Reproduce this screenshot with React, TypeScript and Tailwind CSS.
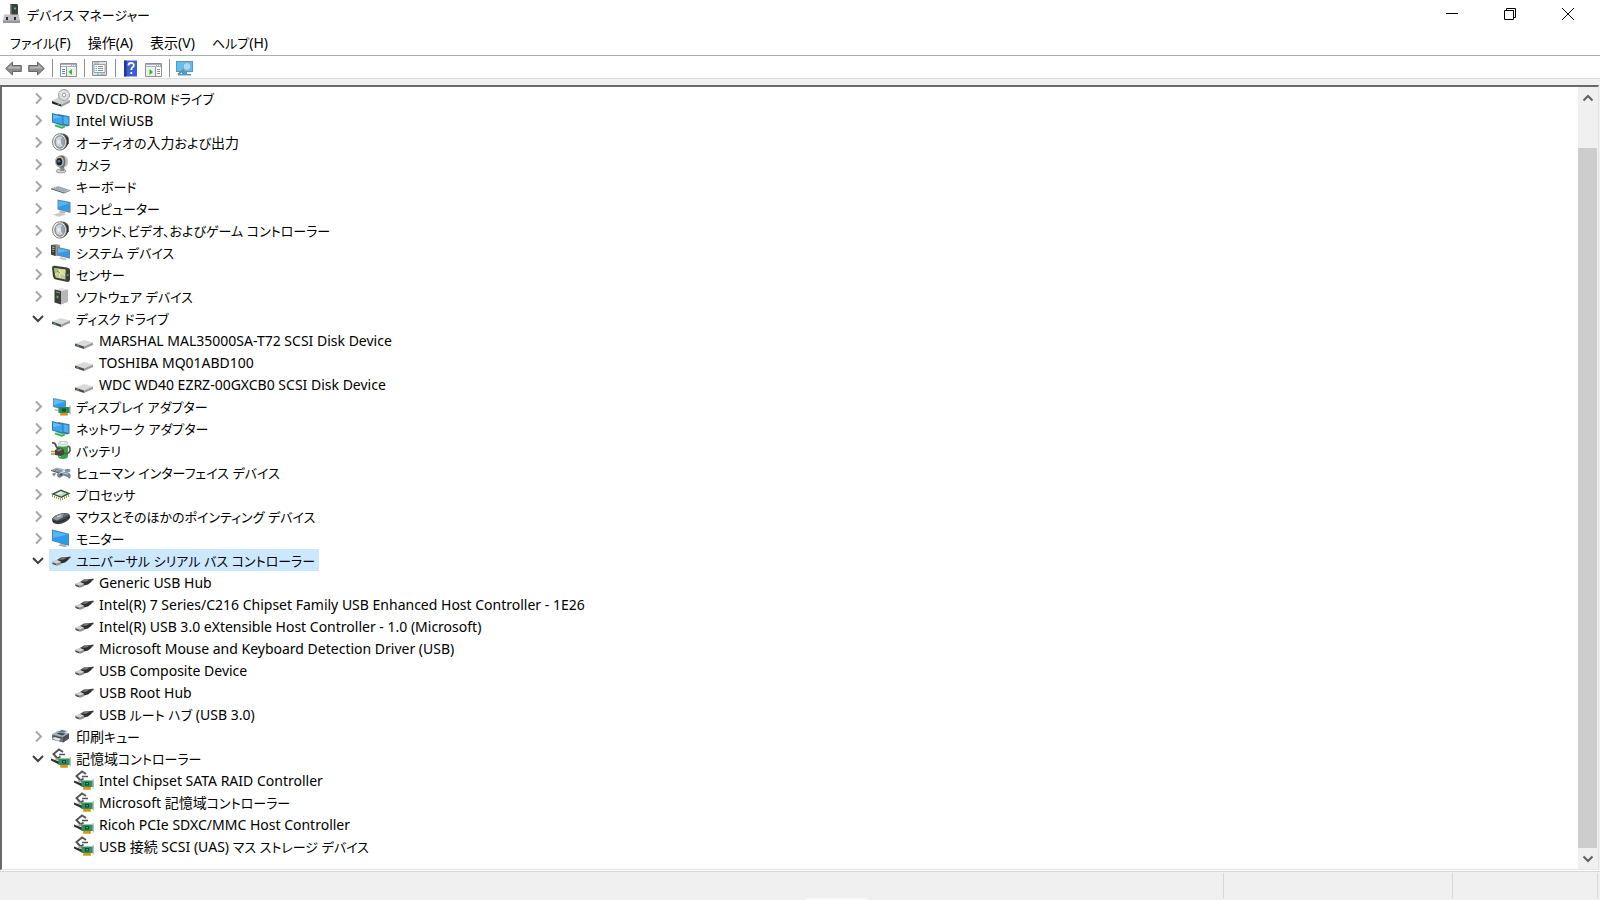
import { useState } from 'react';
import type { ReactNode } from 'react';

type IconName =
  | 'dvd' | 'network' | 'speaker' | 'camera' | 'keyboard' | 'computer' | 'system'
  | 'sensor' | 'software' | 'disk' | 'display' | 'battery' | 'hid' | 'cpu'
  | 'mouse' | 'monitor' | 'usb' | 'printer' | 'storage';

type Category = {
  label: string;
  icon: IconName;
  children?: string[];
};

const categories: Category[] = [
  { label: 'DVD/CD-ROM ドライブ', icon: 'dvd' },
  { label: 'Intel WiUSB', icon: 'network' },
  { label: 'オーディオの入力および出力', icon: 'speaker' },
  { label: 'カメラ', icon: 'camera' },
  { label: 'キーボード', icon: 'keyboard' },
  { label: 'コンピューター', icon: 'computer' },
  { label: 'サウンド、ビデオ、およびゲーム コントローラー', icon: 'speaker' },
  { label: 'システム デバイス', icon: 'system' },
  { label: 'センサー', icon: 'sensor' },
  { label: 'ソフトウェア デバイス', icon: 'software' },
  {
    label: 'ディスク ドライブ',
    icon: 'disk',
    children: [
      'MARSHAL MAL35000SA-T72 SCSI Disk Device',
      'TOSHIBA MQ01ABD100',
      'WDC WD40 EZRZ-00GXCB0 SCSI Disk Device',
    ],
  },
  { label: 'ディスプレイ アダプター', icon: 'display' },
  { label: 'ネットワーク アダプター', icon: 'network' },
  { label: 'バッテリ', icon: 'battery' },
  { label: 'ヒューマン インターフェイス デバイス', icon: 'hid' },
  { label: 'プロセッサ', icon: 'cpu' },
  { label: 'マウスとそのほかのポインティング デバイス', icon: 'mouse' },
  { label: 'モニター', icon: 'monitor' },
  {
    label: 'ユニバーサル シリアル バス コントローラー',
    icon: 'usb',
    children: [
      'Generic USB Hub',
      'Intel(R) 7 Series/C216 Chipset Family USB Enhanced Host Controller - 1E26',
      'Intel(R) USB 3.0 eXtensible Host Controller - 1.0 (Microsoft)',
      'Microsoft Mouse and Keyboard Detection Driver (USB)',
      'USB Composite Device',
      'USB Root Hub',
      'USB ルート ハブ (USB 3.0)',
    ],
  },
  { label: '印刷キュー', icon: 'printer' },
  {
    label: '記憶域コントローラー',
    icon: 'storage',
    children: [
      'Intel Chipset SATA RAID Controller',
      'Microsoft 記憶域コントローラー',
      'Ricoh PCIe SDXC/MMC Host Controller',
      'USB 接続 SCSI (UAS) マス ストレージ デバイス',
    ],
  },
];

const drawings: Record<IconName, ReactNode> = {
  dvd: (
    <>
      <path d="M1 13l7-4 11 3-9 4.500z" fill="#cfcfcf" />
      <circle cx="13" cy="7" r="5.500" fill="#dcdfdf" stroke="#9da1a1" />
      <path d="M9 4l4 3.500L17.500 5" stroke="#fafafa" fill="none" />
      <circle cx="13" cy="7" r="1.700" fill="#fff" stroke="#8d9191" strokeWidth=".8" />
      <path d="M1 13l9 3.500v2L1 15.500z" fill="#222" />
      <path d="M10 16.500l9-4.500v2.500l-9 4.500z" fill="#9d9d9d" />
      <path d="M6.500 15.500l2 .8v1l-2-.7z" fill="#35c24a" />
    </>
  ),
  network: (
    <>
      <path d="M3 15l4-1 7 2.500-4 2z" fill="#8fdc8f" />
      <path d="M4 15.500l7 2.500 3-1.500" stroke="#32b34a" strokeWidth="1.500" fill="none" />
      <path d="M7 4l11.500 2.200v9.300L16 16.500 7 14z" fill="#3079a8" />
      <path d="M8 5.200l9.500 2v7.600L8 12.800z" fill="#4fb2f0" />
      <path d="M1 3l11.500 3v10L1 12.500z" fill="#2b79a9" />
      <path d="M2 4.400l9.500 2.500v7.700L2 11.800z" fill="#3aa5ee" />
      <path d="M2 4.400l9.500 2.500L2 9z" fill="#66bff5" />
    </>
  ),
  speaker: (
    <>
      <path d="M9 1.500c5-.5 7.500 1.500 8.500 4v6c-1.500 3.500-3.500 6-8 7z" fill="#555" />
      <path d="M14 3.500l3.500 3v5l-3 3z" fill="#2c2c2c" />
      <ellipse cx="8.500" cy="10" rx="7" ry="8.200" fill="#f0f0f0" stroke="#808080" />
      <ellipse cx="8.800" cy="10" rx="5" ry="6.300" fill="#9aa3a8" stroke="#787f83" strokeWidth=".8" />
      <path d="M5 7c2-3 5-3 6-2l-2 5 3 4c-3 2-6 1-7-2z" fill="#ccd7dc" />
      <circle cx="8" cy="10" r="2" fill="#e6edf0" />
    </>
  ),
  camera: (
    <>
      <ellipse cx="10" cy="17" rx="5" ry="2" fill="#d0d0d0" stroke="#888" strokeWidth=".7" />
      <path d="M9 13l4-1 .5 5H9.500z" fill="#8a8a8a" />
      <circle cx="10.500" cy="7.500" r="6.300" fill="#6e6e6e" />
      <path d="M13 2a6 6 0 010 11.500c2-4 2-8 0-11.500z" fill="#c4c4c4" />
      <ellipse cx="8.500" cy="7.500" rx="4.300" ry="5.300" fill="#b9b9b9" />
      <ellipse cx="8.300" cy="7.700" rx="3" ry="3.800" fill="#1e2226" />
      <circle cx="8" cy="7.300" r="1.300" fill="#5b7fa6" />
    </>
  ),
  keyboard: (
    <>
      <path d="M0 12.200L7 10l12.500 4-6.500 2.500z" fill="#b7c0c6" />
      <path d="M0 12.200v1l13 4.200v-1z" fill="#4c5358" />
      <path d="M13 16.400v1l6.500-2.600V14z" fill="#767e83" />
      <path d="M3 12.200l10 3.200M5 11.500l10 3.200M7 10.900l9.500 3" stroke="#7f888e" strokeWidth=".7" strokeDasharray="1.500 .7" />
    </>
  ),
  computer: (
    <>
      <path d="M1 16.500l9-2 6 2-8 2.500z" fill="#dde0e2" />
      <path d="M3 16.600l7-1.500 4 1.300-7 2z" fill="#c4c9cc" />
      <path d="M9 12.500l6 1.500-1 1.500-6-1z" fill="#aeb5b9" />
      <path d="M6.500 1.500L19.500 4v11L6.500 11.500z" fill="#6e8494" />
      <path d="M7.500 2.800L18.500 5v8.500L7.500 10.500z" fill="#2f9cea" />
      <path d="M7.500 2.800L18.500 5l-11 4z" fill="#55b6f4" />
    </>
  ),
  system: (
    <>
      <path d="M0 3l5-1 4 1v10l-4 1-5-1.500z" fill="#999" />
      <path d="M0 3l4.500.7V14L0 12.500z" fill="#3a3a3a" />
      <path d="M1 5l2.500.4M1 7l2.500.4" stroke="#eee" strokeWidth=".8" />
      <circle cx="2" cy="9.500" r=".8" fill="#3fd04f" />
      <path d="M10 15l6 2-2 1.500-6-2z" fill="#c5c9cb" />
      <path d="M6 4.800l13 3v9L6 13.500z" fill="#6b8597" />
      <path d="M7 6.200l11 2.500v6.700L7 12.600z" fill="#2f9cea" />
      <path d="M7 6.200l11 2.500L7 11z" fill="#58b8f5" />
    </>
  ),
  sensor: (
    <>
      <path d="M1 4q0-2.500 2.500-2.300L16 3.500q3 .5 3 3v8.500q0 3-2.500 3L5 15.500Q2.500 15 2 12.500z" fill="#3c3f39" />
      <path d="M3 4l11.500 1.600v10L4.500 13.500z" fill="#bccf8c" />
      <path d="M3 4l5 .7L7 9l-3.300-.8z" fill="#98c46d" />
      <path d="M9 5l5.500.7v3L9 9z" fill="#dcd99a" />
      <path d="M4 11l4-3 6 3M8 5l1 9" stroke="#f5f3d0" strokeWidth="1" fill="none" />
      <path d="M6 7l3 2" stroke="#d55a3a" strokeWidth="1" />
      <circle cx="16.700" cy="11" r=".9" fill="#8a8d86" />
    </>
  ),
  software: (
    <>
      <path d="M3.500 3.500L10 2l7 1.500-6 1.500z" fill="#e4e4e4" />
      <path d="M3.500 3.500L10 5v13.500l-6.500-2z" fill="#3b3b3b" />
      <path d="M10 5l7-1.500v12.500l-7 2.500z" fill="#b7b7b7" />
      <path d="M5 6l4 1" stroke="#999" />
      <path d="M5.500 9.500l2 .5v2.500l-2-.5z" fill="#35c443" />
    </>
  ),
  disk: (
    <>
      <path d="M1 13.500l9-3.500 9 2.500-9 4z" fill="#dadada" />
      <path d="M1 13.500l9 3v2.500l-9-3z" fill="#4a4a4a" />
      <path d="M10 16.500l9-4V15l-9 4z" fill="#9c9c9c" />
      <path d="M2.500 15l2.500.8v1l-2.500-.8z" fill="#45c850" />
    </>
  ),
  display: (
    <>
      <path d="M2 2l13 2.500v10L2 11z" fill="#5b93b6" />
      <path d="M3 3.200l11 2.200v7.700L3 10.200z" fill="#2f9cea" />
      <path d="M3 3.200l11 2.200L3 9z" fill="#63bdf5" />
      <path d="M4 13l4 .8v1.700l-4-1z" fill="#b4bbbf" />
      <path d="M7.500 11h11.500v6H7.500z" fill="#2c8a5b" />
      <path d="M18.500 9.500h1.200v9h-1.200z" fill="#b8b8b8" />
      <path d="M11 12.500h4v3h-4z" fill="#174c34" />
      <path d="M9 17h8v2.500H9z" fill="#eca41e" />
      <path d="M11 17v2.500M13 17v2.500M15 17v2.500" stroke="#a86c08" strokeWidth=".6" />
    </>
  ),
  battery: (
    <>
      <path d="M7 4q0-3 5-3t5 3v12q0 3-5 3t-5-3z" fill="#35a344" />
      <path d="M7 4q0-3 5-3t5 3v2q-5 1.500-10 0z" fill="#dfe9df" />
      <ellipse cx="12" cy="3" rx="3.500" ry="1.300" fill="#fff" stroke="#a5b5a5" strokeWidth=".6" />
      <path d="M9 8v9" stroke="#90dc7d" strokeWidth="1.500" />
      <path d="M1 3q3-1 4 3l3 5" fill="none" stroke="#4b4b4b" strokeWidth="1.800" />
      <path d="M13 13c5 2 7-2 5.500-6l-2-1" fill="none" stroke="#5a5a5a" strokeWidth="1.700" />
      <path d="M4 10l5-2.500 4 2v5L9.500 16 4 15z" fill="#45453d" />
      <path d="M5.500 10.500l4-2 2 1-4 2z" fill="#8d8d80" />
      <path d="M0 11.500h4M0 14h4" stroke="#b39537" strokeWidth="1.300" />
    </>
  ),
  hid: (
    <>
      <path d="M0 8l6-2.500 8 2L9 10.500z" fill="#aab3b9" />
      <path d="M0 8l9 2.500v1.200L0 9z" fill="#4e565b" />
      <path d="M2 8l7 2M4 7l7 2" stroke="#69737a" strokeWidth=".7" />
      <path d="M6 13q1-4 5-3.500l6 1q3 1 2.500 5-1 2-3-.5l-4-1.500-3 2q-3 1-3.500-2.500z" fill="#6f8290" />
      <path d="M8 11.500q2-1.500 4-.8l5 1.500" stroke="#d2dce2" strokeWidth="1" fill="none" />
      <ellipse cx="16.500" cy="8.500" rx="3" ry="1.800" fill="#87929a" />
      <path d="M1 12l3-1.500 1 1-2 3z" fill="#7b888f" />
      <circle cx="10" cy="12.500" r="1" fill="#333c42" />
    </>
  ),
  cpu: (
    <>
      <path d="M0 10l10-4.500 9.500 4-9 4.500z" fill="#2a5b43" />
      <path d="M3.500 9.900L10 7l6 2.600-5.700 2.900z" fill="#c9d4c6" />
      <path d="M5.500 9.800L10 7.800l2 .9-5 2.200z" fill="#f1f4ef" />
      <path d="M1.500 11v2M3.500 12v2M5.500 12.700v2M7.500 13.500v2M9.500 14v2.500M11.500 14v2M13.500 13v2M15.500 12v2M17.500 11v2" stroke="#c08f2c" strokeWidth="1" />
    </>
  ),
  mouse: (
    <>
      <path d="M1 14q0-3.500 6-5.500 7-2.500 11-.5 2 2 1 4-2.500 3.500-8 5.500-5.500 1.500-8.500-.5Q1 15.500 1 14z" fill="#40474e" />
      <path d="M2 13q1-3 6-4.500 3-1 5-1l-1 4-6 3z" fill="#8e99a3" />
      <path d="M13 7.500q4-.5 5 1.200l-5.500 2.800z" fill="#646f78" />
      <path d="M2 15q3 2 8 .5t8-4.500" stroke="#1f2327" fill="none" />
      <path d="M6 11l4-1.500" stroke="#dfe5ea" />
    </>
  ),
  monitor: (
    <>
      <path d="M9 14.500l6 1.500v1.500l1.500.8-3 1-6.500-2 2-.8z" fill="#aab3b8" />
      <path d="M1 1.500l17 4.200v12L1 13z" fill="#4f86ab" />
      <path d="M2 2.900l15 3.700v9.700L2 12.200z" fill="#2b9df0" />
      <path d="M2 2.900l15 3.700L2 10z" fill="#55b7f6" />
    </>
  ),
  usb: (
    <>
      <path d="M14 8.500q3-2 5.500-2v1.800q-2.500.2-4.500 2z" fill="#383838" />
      <path d="M6 10l4-2.500 7-.2q1.500.8.5 2.400L14 12.500l-5 1.200-3-1.500z" fill="#2f2f2f" />
      <path d="M7.500 9.500l3-1.500 5-.2-3.500 2z" fill="#777" />
      <path d="M1 12l5-2 4 1.800v2.400L6 15.800 1 14z" fill="#8f8f8f" />
      <path d="M1 12l5-2 4 1.800-4 1.700z" fill="#d2d2d2" />
      <path d="M2 13.100l3 1v.9l-3-1z" fill="#3a3a3a" />
    </>
  ),
  printer: (
    <>
      <path d="M5 5.500L10.500 3l7 2-2 3.500z" fill="#dde4e9" />
      <path d="M7 5.700l4-1.700 4.500 1.200-4 2z" fill="#54738d" />
      <path d="M1 8.500L6.500 5.500 18 7.500v5L12 16.500 1 13.500z" fill="#6a7278" />
      <path d="M1 8.500L6.500 5.500 18 7.500 12 11z" fill="#aab3b9" />
      <path d="M12 11l6-3.500v5l-6 4z" fill="#4a5157" />
      <path d="M5.500 7.800l3-1.300 6 1.200-3 1.700z" fill="#3f4c57" />
      <path d="M1 12.500l3-1.500 6 1.700-2.500 2.300z" fill="#e2e7ea" />
      <path d="M2 10l9 2.300" stroke="#3a4147" strokeWidth=".8" />
    </>
  ),
  storage: (
    <>
      <path d="M12 4L8 1.500 2.500 6l4 4.500 3-2" fill="none" stroke="#555" strokeWidth="2" />
      <path d="M8 6.500h6" stroke="#555" strokeWidth="1.500" />
      <path d="M0 10.500l8 3v3l-8-4z" fill="#2f2f2f" />
      <path d="M3 11l3-1 3 1.500v2z" fill="#a5a5a5" />
      <path d="M7.500 10.500h12v6.500h-12z" fill="#2b9160" />
      <path d="M18.500 9h1.300v9.500h-1.300z" fill="#bcbcbc" />
      <path d="M11 12h4v3.500h-4z" fill="#15492f" />
      <path d="M12.300 13h1.500v1.300h-1.500z" fill="#71c79c" />
      <path d="M9 17h8v2.700H9z" fill="#eea51c" />
      <path d="M11 17v2.700M13 17v2.700M15 17v2.700" stroke="#a86c08" strokeWidth=".6" />
    </>
  ),
};

function DeviceIcon({ name }: { name: IconName }) {
  return (
    <svg viewBox="0 0 20 20" className="size-5 shrink-0" aria-hidden="true">
      {drawings[name]}
    </svg>
  );
}

function Chevron({ open }: { open: boolean }) {
  return open ? (
    <svg viewBox="0 0 12 12" className="size-3" fill="none" stroke="#404040" strokeWidth="2">
      <path d="M1 4l5 5 5-5" />
    </svg>
  ) : (
    <svg viewBox="0 0 12 12" className="size-3" fill="none" stroke="#a6a6a6" strokeWidth="2">
      <path d="M4 1.500l5 5-5 5" />
    </svg>
  );
}

// Kana is set one size down so that it sits evenly beside Latin text and kanji.
function Text({ children }: { children: string }) {
  return (
    <span className="block whitespace-nowrap pt-[2px] leading-5">
      {children.split(/([\u3001\u3040-\u30ff]+)/).map((run, i) =>
        i % 2 ? <span key={i} className="text-[13px]">{run}</span> : run
      )}
    </span>
  );
}

function TitleBar() {
  return (
    <header className="flex h-7 shrink-0 items-center px-[3px]">
      <svg viewBox="0 0 17 20" className="h-5 w-[17px]" aria-hidden="true">
        <path d="M7 0h7l1 1v10H7z" fill="#3b3f3e" />
        <path d="M7 0l1.500 1v10H7z" fill="#8a8a8a" />
        <path d="M11 3.500h2v2h-2z" fill="#37d257" />
        <path d="M1 10.500h15l1 7.500H0z" fill="#c1c1c5" />
        <path d="M0 16.500h17V19H0z" fill="#97979d" />
        <path d="M3 13h2v3H3zM11 13h2v3h-2z" fill="#2c2c2c" />
      </svg>
      <h1 className="pl-[7px] text-sm"><Text>デバイス マネージャー</Text></h1>
      <div className="ml-auto flex">
        <button aria-label="最小化" className="grid h-7 w-[58px] place-items-center">
          <svg viewBox="0 0 12 12" className="size-3" stroke="#000"><path d="M0 5.500h12" /></svg>
        </button>
        <button aria-label="元に戻す" className="grid h-7 w-[58px] place-items-center">
          <svg viewBox="0 0 12 12" className="size-3" fill="none" stroke="#000">
            <path d="M.5 2.500h9v9h-9zM2.500 2.500v-2h9v9h-2" />
          </svg>
        </button>
        <button aria-label="閉じる" className="grid h-7 w-[58px] place-items-center">
          <svg viewBox="0 0 12 12" className="size-3" stroke="#000"><path d="M0 0l12 12M12 0L0 12" /></svg>
        </button>
      </div>
    </header>
  );
}

function MenuBar() {
  return (
    <nav className="flex h-[27px] shrink-0 items-center gap-[17px] pl-[10px] text-sm">
      {['ファイル(F)', '操作(A)', '表示(V)', 'ヘルプ(H)'].map((item) => (
        <button key={item}><Text>{item}</Text></button>
      ))}
    </nav>
  );
}

function Separator() {
  return <span className="ml-[7px] mr-[6px] h-[18px] w-px bg-[#8f8f8f]" />;
}

function ToolButton({ label, children }: { label: string; children: ReactNode }) {
  return (
    <button aria-label={label} className="grid w-[17px] place-items-center">
      <svg viewBox="0 0 17 17" className="size-[17px]">{children}</svg>
    </button>
  );
}

function Toolbar() {
  return (
    <div className="flex h-[24px] shrink-0 items-center border-y border-t-[#adadad] border-b-[#dcdcdc] pl-[5px] pt-[2px]">
      <div className="flex gap-[6px]">
        <ToolButton label="戻る">
          <path d="M.7 8.500L7.500 2v3.500h8.800v6H7.500V15z" fill="#8d8d8d" stroke="#666" />
          <path d="M2.500 8.500l4-4v2.200h8.500v1.800z" fill="#b9b9b9" />
        </ToolButton>
        <ToolButton label="進む">
          <path d="M16.300 8.500L9.500 2v3.500H.7v6h8.800V15z" fill="#8d8d8d" stroke="#666" />
          <path d="M14.500 8.500l-4-4v2.200H2v1.800z" fill="#b9b9b9" />
        </ToolButton>
      </div>
      <Separator />
      <span className="w-[1px]" />
      <ToolButton label="コンソール ツリーの表示/非表示">
        <path d="M.5 3.500h16v13H.5z" fill="#fff" stroke="#8b929a" />
        <path d="M1 4h15v3H1z" fill="#a8b0b8" />
        <path d="M1 5.500h10M12 5.500h1M14 5.500h1" stroke="#f3f5f7" />
        <path d="M7 7.500h9V16H7z" fill="#eef0f0" />
        <path d="M6.500 7v9" stroke="#8b929a" />
        <path d="M2 9.500h3M2 11.500h3M2 13.500h3" stroke="#5f89b3" />
        <path d="M12 9v6l-3.500-3z" fill="#3eb230" />
      </ToolButton>
      <Separator />
      <ToolButton label="プロパティ">
        <path d="M1.500 1.500h14v14h-14z" fill="#dfe2e5" stroke="#8a8f95" />
        <path d="M3 4.500h11v8H3z" fill="#fff" stroke="#9aa0a5" />
        <path d="M3 3h5" stroke="#9aa0a5" />
        <path d="M7 6.500h5M7 8.500h5M7 10.500h5" stroke="#858b92" />
        <path d="M4.500 6.500h1.500M4.500 8.500h1.500M4.500 10.500h1.500" stroke="#44b7e8" />
        <path d="M6 14.200h2" stroke="#44dcec" strokeWidth="1.500" />
        <path d="M9 14.200h5" stroke="#aaa" />
      </ToolButton>
      <Separator />
      <ToolButton label="ヘルプ">
        <path d="M2.500.5H15v16H2.500z" fill="#3b5fcf" />
        <path d="M2 .5h2.500v16H2z" fill="#203a94" />
        <path d="M6.500 5.500q0-2.500 2.700-2.500t2.600 2.300q0 1.400-1.500 2.200-1 .6-1 2.500M9.300 12v2" fill="none" stroke="#fff" strokeWidth="1.800" />
      </ToolButton>
      <span className="w-[6px]" />
      <ToolButton label="操作ウィンドウ">
        <path d="M.5 3.500h16v13H.5z" fill="#fff" stroke="#8b929a" />
        <path d="M1 4h15v3H1z" fill="#a8b0b8" />
        <path d="M1 5.500h10M12 5.500h1M14 5.500h1" stroke="#f3f5f7" />
        <path d="M1 7.500h9V16H1z" fill="#eef0f0" />
        <path d="M10.500 7v9" stroke="#8b929a" />
        <path d="M12 9.500h3M12 11.500h3M12 13.500h3" stroke="#8a949e" />
        <path d="M4.500 9v6L8 12z" fill="#3eb230" />
      </ToolButton>
      <Separator />
      <ToolButton label="ハードウェア変更のスキャン">
        <path d="M0 1h17v11H0z" fill="#4f9cc8" />
        <path d="M1 2h15v9H1z" fill="#5fc0f0" />
        <path d="M6 12h5v2h4v1.500H2V14h4z" fill="#4d9cc4" />
        <path d="M8 9.500L2 14.500" stroke="#6c8795" strokeWidth="1.700" />
        <circle cx="11" cy="6.500" r="4" fill="#a5dcf7" stroke="#7fa5ba" />
      </ToolButton>
    </div>
  );
}

function ScrollBar() {
  return (
    <div className="flex w-5 shrink-0 flex-col bg-[#f0f0f0]">
      <button aria-label="上へスクロール" className="grid h-[21px] place-items-center">
        <svg viewBox="0 0 12 12" className="size-3" fill="none" stroke="#606060" strokeWidth="2">
          <path d="M1.500 8.500L6 4l4.500 4.500" />
        </svg>
      </button>
      <div className="flex grow flex-col">
        <div className="h-10" />
        <div className="mr-px grow bg-[#cdcdcd]" />
      </div>
      <button aria-label="下へスクロール" className="grid h-[21px] place-items-center">
        <svg viewBox="0 0 12 12" className="size-3" fill="none" stroke="#606060" strokeWidth="2">
          <path d="M1.500 3.500L6 8l4.500-4.500" />
        </svg>
      </button>
    </div>
  );
}

function TreeLabel({
  icon,
  label,
  selected,
  onSelect,
}: {
  icon: IconName;
  label: string;
  selected: boolean;
  onSelect: () => void;
}) {
  return (
    <button
      onClick={onSelect}
      className={`flex h-[22px] items-center gap-[5px] pl-[2px] pr-1 ${selected ? 'bg-[#cce8ff]' : ''}`}
    >
      <DeviceIcon name={icon} />
      <Text>{label}</Text>
    </button>
  );
}

export default function App() {
  const [open, setOpen] = useState<Record<string, boolean>>({
    'ディスク ドライブ': true,
    'ユニバーサル シリアル バス コントローラー': true,
    '記憶域コントローラー': true,
  });
  const [selected, setSelected] = useState('ユニバーサル シリアル バス コントローラー');

  const toggle = (label: string) => setOpen((prev) => ({ ...prev, [label]: !prev[label] }));

  return (
    <div className="flex h-screen flex-col bg-white font-['Noto_Sans','Noto_Sans_CJK_JP',sans-serif] text-black [font-feature-settings:'palt']">
      <TitleBar />
      <MenuBar />
      <Toolbar />

      <main className="flex min-h-0 grow flex-col bg-[#f0f0f0] pr-px pt-[6px]">
        <div className="flex min-h-0 grow border-b border-l-2 border-r border-t-2 border-b-[#e3e3e3] border-l-[#696969] border-r-[#e3e3e3] border-t-[#696969] bg-white">
          <ul className="min-w-0 grow overflow-hidden text-sm">
            {categories.map((cat) => (
              <li key={cat.label}>
                <div className="flex h-[22px] items-center pl-[30px]">
                  <button
                    aria-label={`${cat.label} を展開`}
                    aria-expanded={!!open[cat.label]}
                    onClick={() => toggle(cat.label)}
                    className="mr-[5px]"
                  >
                    <Chevron open={!!open[cat.label]} />
                  </button>
                  <TreeLabel
                    icon={cat.icon}
                    label={cat.label}
                    selected={selected === cat.label}
                    onSelect={() => setSelected(cat.label)}
                  />
                </div>
                {cat.children && open[cat.label] && (
                  <ul className="pl-[70px]">
                    {cat.children.map((child) => (
                      <li key={child}>
                        <TreeLabel
                          icon={cat.icon}
                          label={child}
                          selected={selected === child}
                          onSelect={() => setSelected(child)}
                        />
                      </li>
                    ))}
                  </ul>
                )}
              </li>
            ))}
          </ul>
          <ScrollBar />
        </div>
      </main>

      <footer className="mt-px flex h-[29px] shrink-0 flex-col border-t border-[#d7d7d7] bg-[#f0f0f0] pt-px">
        <div className="flex grow pr-[2px]">
          <div className="grow border-r border-[#d7d7d7]" />
          <div className="w-[229px] border-r border-[#d7d7d7]" />
          <div className="w-[145px] border-r border-[#d7d7d7]" />
        </div>
        <div className="ml-[806px] h-[2px] w-[61px] bg-[#fafafa]" />
      </footer>
    </div>
  );
}
